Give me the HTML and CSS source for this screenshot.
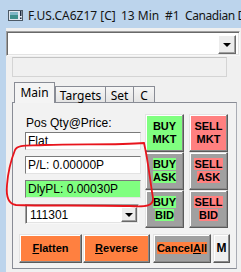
FILE: index.html
```html
<!DOCTYPE html>
<html lang="en">

<head>
    <meta charset="UTF-8">
    <title>F.US.CA6Z17 [C] 13 Min #1 Canadian Dollar</title>
    <link rel="stylesheet" href="styles.css">
</head>

<body>
    <div class="titlebar">
        <svg class="app-icon" width="15" height="11" viewBox="0 0 15 11">
            <rect x="0.5" y="0.5" width="14" height="10" fill="#dfe6ee" stroke="#4d5a66"/>
            <rect x="2" y="2" width="8" height="7" fill="#3d8f8c"/>
            <rect x="2" y="2" width="8" height="3" fill="#7fb7c7"/>
            <rect x="12" y="1" width="1.5" height="5" fill="#1d2a40"/>
            <rect x="12" y="7.5" width="1.5" height="1.5" fill="#1d2a40"/>
        </svg>
        <span class="t-symbol">F.US.CA6Z17 [C]</span>
        <span class="t-period">13 Min</span>
        <span class="t-num">#1</span>
        <span class="t-name">Canadian Dollar</span>
    </div>

    <div class="client">
        <div class="combo top-combo">
            <span class="drop-btn"><i class="tri"></i></span>
        </div>
        <div class="readonly-box"></div>

        <div class="tabs">
            <div class="tab active">Main</div>
            <div class="tab tab-targets">Targets</div>
            <div class="tab tab-set">Set</div>
            <div class="tab tab-c">C</div>
        </div>

        <div class="panel">
            <div class="main-row">
                <div class="left-col">
                    <div class="label">Pos Qty@Price:</div>
                    <div class="field">Flat</div>
                    <div class="field">P/L: 0.00000P</div>
                    <div class="field green">DlyPL: 0.00030P</div>
                    <div class="combo qty-combo">
                        <span class="combo-text">111301</span>
                        <span class="drop-btn"><i class="tri"></i></span>
                    </div>
                </div>
                <div class="order-grid">
                    <button class="btn buy-fill">BUY<br>MKT</button>
                    <button class="btn sell-fill">SELL<br>MKT</button>
                    <button class="btn gray"><span class="hl hl-buy">BUY<br>ASK</span></button>
                    <button class="btn gray"><span class="hl hl-sell">SELL<br>ASK</span></button>
                    <button class="btn gray"><span class="hl hl-buy">BUY<br>BID</span></button>
                    <button class="btn gray"><span class="hl hl-sell">SELL<br>BID</span></button>
                </div>
            </div>
            <div class="bottom-row">
                <button class="btn wide orange flatten"><u>F</u>latten</button>
                <button class="btn wide orange reverse"><u>R</u>everse</button>
                <button class="btn wide gray cancel"><span class="hl hl-orange">Cancel<u>A</u>ll</span></button>
                <button class="btn wide light mini">M</button>
            </div>
        </div>
    </div>

    <!-- red marker drawn over the screenshot -->
    <svg class="markup" width="241" height="272" viewBox="0 0 241 272">
        <path d="M 15 150 C 18 144, 28 146, 45 145 C 80 144, 120 145, 144 143 C 148 160, 150 180, 153 198 C 154 206, 146 207, 130 206 C 90 205, 40 206, 16 205 C 8 204, 6 196, 7 185 C 8 172, 11 160, 15 150"
            fill="none" stroke="#e8141c" stroke-width="1.8" stroke-linecap="round"/>
    </svg>
</body>

</html>
```

FILE: styles.css
```css
/* Global settings */
*, *::before, *::after {
    box-sizing: border-box;
}

html,
body {
    margin: 0;
    padding: 0;
}

body {
    position: relative;
    width: 241px;
    height: 272px;
    overflow: hidden;
    background-color: #bcd4ec;
    font-family: "Liberation Sans", Arial, sans-serif;
    font-size: 12px;
    color: #000;
}

/* Window caption */
.titlebar {
    display: flex;
    align-items: center;
    height: 28px;
    padding-left: 8px;
    padding-top: 2px;
    font-family: "Noto Sans", sans-serif;
    font-size: 12px;
    color: #141414;
    white-space: nowrap;
    overflow: hidden;
}

.app-icon {
    flex-shrink: 0;
    margin-right: 5px;
}

.titlebar span {
    flex-shrink: 0;
}

.t-symbol {
    width: 93px;
}

.t-period {
    width: 44px;
}

.t-num {
    width: 20px;
}

.t-name {
    letter-spacing: -0.4px;
}

/* Client area */
.client {
    margin-left: 6px;
    height: 244px;
    padding-top: 3px;
    background-color: #f0f0f0;
}

.combo {
    position: relative;
    display: flex;
    justify-content: flex-end;
    align-items: stretch;
    background-color: #fff;
    border: 1px solid;
    border-color: #a0a0a0 #f8f8f8 #f8f8f8 #a0a0a0;
    box-shadow: inset 1px 1px #696969, inset -1px -1px #e3e3e3;
}

.top-combo {
    width: 234px;
    height: 25px;
    padding: 3px 3px 1px 0;
}

.top-combo .drop-btn {
    width: 18px;
}

.drop-btn {
    display: flex;
    justify-content: center;
    align-items: center;
    background-color: #ececec;
    border: 1px solid;
    border-color: #fff #696969 #696969 #fff;
    box-shadow: inset -1px -1px #a0a0a0;
}

.tri {
    width: 0;
    height: 0;
    border-left: 4px solid transparent;
    border-right: 4px solid transparent;
    border-top: 4px solid #000;
}

.readonly-box {
    width: 215px;
    height: 20px;
    margin: 1px 0 0 6px;
    border: 1px solid #d4d4d4;
    border-top-color: #c4c4c4;
    background-color: #f0f0f0;
}

/* Tabs */
.tabs {
    display: flex;
    align-items: flex-end;
    height: 20px;
    margin-top: 5px;
    padding-left: 8px;
    font-family: "Noto Sans", sans-serif;
    font-size: 12px;
}

.tab {
    height: 16px;
    padding-top: 1px;
    line-height: 15px;
    text-align: center;
    border: 1px solid #898c95;
    border-bottom: none;
    background: linear-gradient(#f6f6f6, #e4e4e4);
    margin-left: -1px;
}

.tab.active {
    position: relative;
    z-index: 1;
    width: 41px;
    height: 21px;
    margin-left: 0;
    margin-right: 1px;
    margin-bottom: -1px;
    padding-top: 2px;
    background: #f4f4f4;
}

.tab-targets {
    width: 51px;
}

.tab-set {
    width: 29px;
}

.tab-c {
    width: 22px;
}

.panel {
    width: 225px;
    height: 167px;
    margin-left: 6px;
    padding: 11px 0 0 12px;
    border: 1px solid #898c95;
    border-right-color: #a9acb4;
    background-color: #f2f2f2;
}

.main-row {
    display: flex;
}

.left-col {
    width: 116px;
}

.label {
    height: 18px;
    padding: 2px 0 0 1px;
    line-height: 14px;
}

.field {
    height: 18px;
    margin-bottom: 6px;
    padding-left: 2px;
    line-height: 16px;
    white-space: nowrap;
    background-color: #fff;
    border: 1px solid;
    border-color: #7a7a7a #e3e3e3 #e3e3e3 #7a7a7a;
}

.field.green {
    background-color: #80ff80;
}

.qty-combo {
    width: 114px;
    height: 20px;
    margin-top: 1px;
    padding: 2px 1px 1px 0;
    justify-content: space-between;
}

.combo-text {
    padding: 1px 0 0 4px;
    line-height: 14px;
}

.qty-combo .drop-btn {
    width: 16px;
}

/* Order buttons */
.order-grid {
    display: grid;
    grid-template-columns: 39px 39px;
    grid-auto-rows: 38px;
    column-gap: 5px;
    margin-left: 4px;
}

.btn {
    margin: 0;
    padding: 0;
    font-family: "Liberation Sans", Arial, sans-serif;
    font-size: 11px;
    font-weight: bold;
    line-height: 13px;
    color: #000;
    border: 1px solid;
    border-color: #e3e3e3 #5a5a5a #5a5a5a #e3e3e3;
    box-shadow: inset -1px -1px #8a8a8a, inset 1px 1px #fff;
}

.buy-fill {
    background-color: #80ff80;
}

.sell-fill {
    background-color: #ff8080;
}

.gray {
    background-color: #a0a0a0;
}

.hl-buy {
    background-color: #80ff80;
}

.hl-sell {
    background-color: #ff8080;
}

.hl-orange {
    background-color: #ff8040;
}

.bottom-row {
    display: flex;
    height: 29px;
    margin: 6px 0 0 -6px;
}

.orange {
    background-color: #ff8040;
}

.light {
    background-color: #f0f0f0;
}

.flatten {
    width: 63px;
    margin-right: 1px;
}

.reverse {
    width: 67px;
    margin-right: 3px;
}

.cancel {
    width: 58px;
    margin-right: 2px;
}

.mini {
    width: 17px;
    font-size: 12px;
}

.markup {
    position: absolute;
    top: 0;
    left: 0;
    pointer-events: none;
}
```
